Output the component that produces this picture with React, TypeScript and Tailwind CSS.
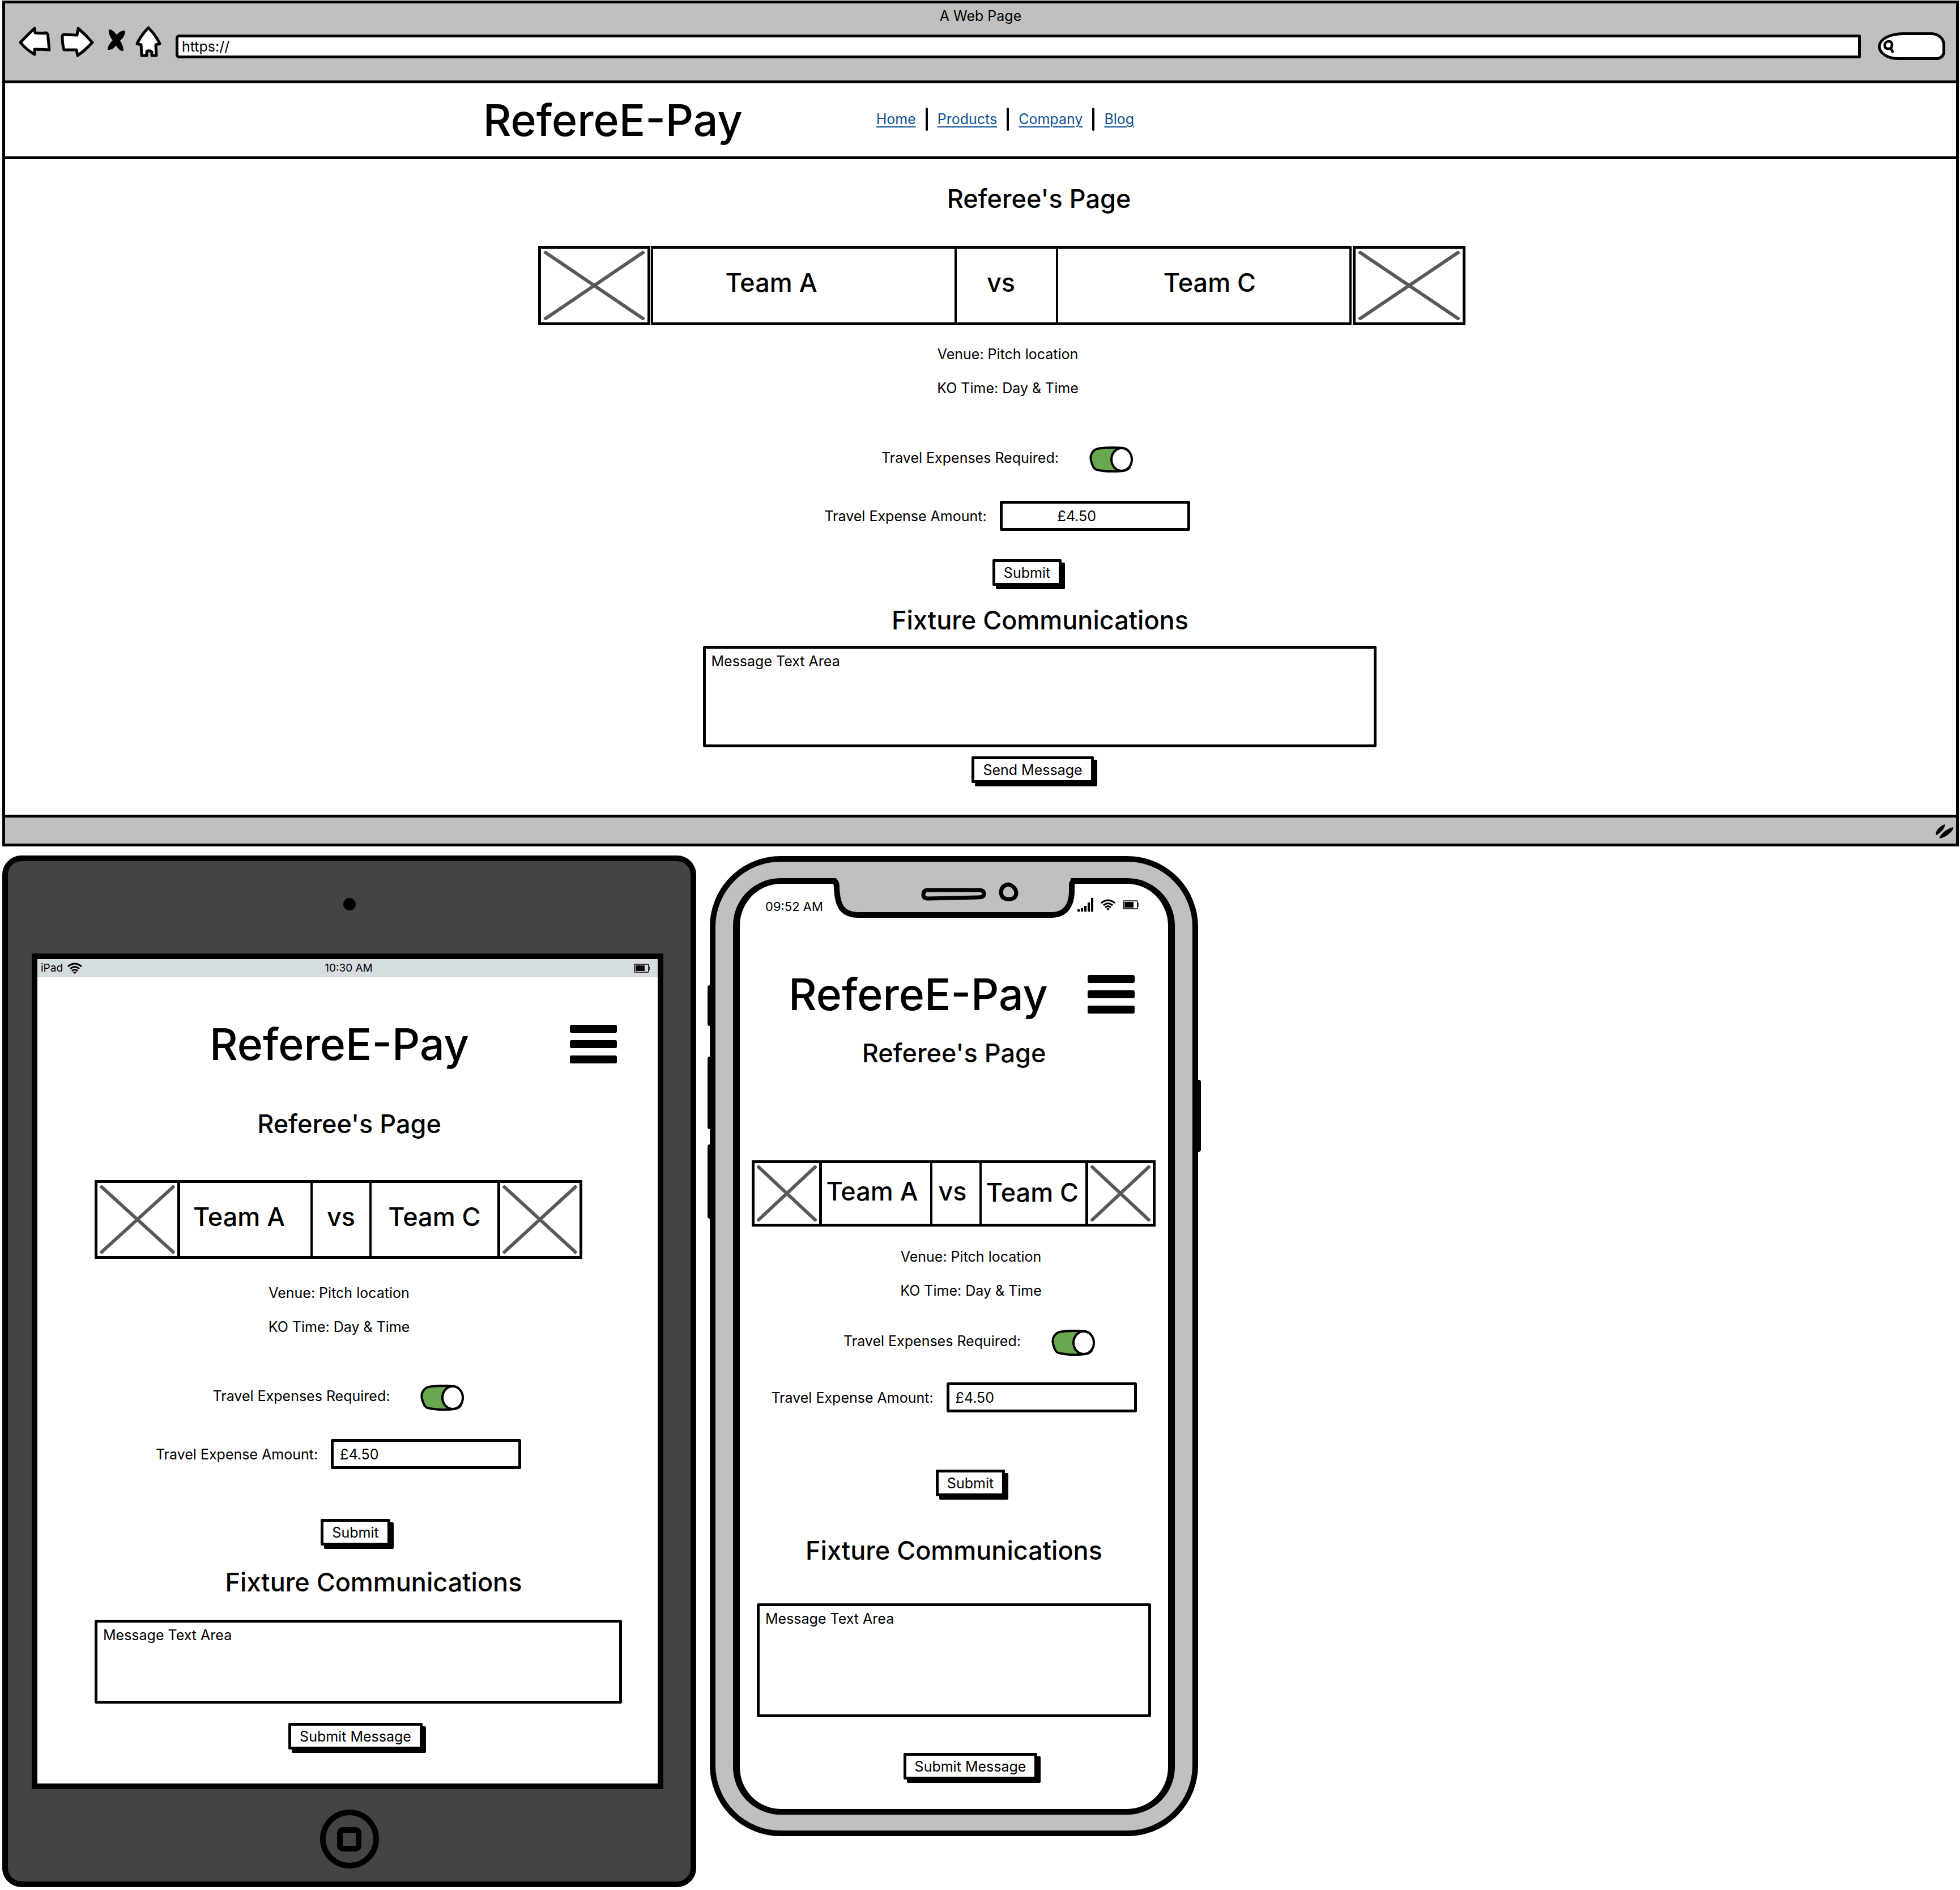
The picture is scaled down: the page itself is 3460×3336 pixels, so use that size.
import { useId, useState, type ReactNode } from "react";

function BackIcon() {
  return (
    <svg viewBox="0 0 58 56" className="h-14 w-[58px] shrink-0" fill="#fff" stroke="#000" strokeWidth="5" strokeLinejoin="round" aria-hidden="true">
      <path d="M4 29 Q18 14 29 4 L30 12 Q42 13 50 12 Q53 13 53 22 L55 42 Q42 41 29 41 L29 50 Q15 42 4 29Z" />
    </svg>
  );
}

function ForwardIcon() {
  return (
    <svg viewBox="0 0 60 56" className="h-14 w-[60px] shrink-0" fill="#fff" stroke="#000" strokeWidth="5" strokeLinejoin="round" aria-hidden="true">
      <path d="M4 19 Q4 14 9 15 L30 16 L32 4 Q46 16 57 29 Q44 43 31 52 L29 42 L7 42 Q4 32 4 19Z" />
    </svg>
  );
}

function StopIcon() {
  return (
    <svg viewBox="0 0 36 56" className="h-14 w-9 shrink-0" aria-hidden="true">
      <path d="M4 6 C12 6 18 14 21 21 C26 28 30 36 30 44 C22 45 17 35 14 29 C8 22 3 15 4 6Z" />
      <path d="M33 8 C24 7 18 14 13 23 C7 29 2 35 2 42 C10 43 16 37 20 29 C27 24 33 18 33 8Z" />
    </svg>
  );
}

function HomeIcon() {
  return (
    <svg viewBox="0 0 46 56" className="h-14 w-[46px] shrink-0" fill="#fff" stroke="#000" strokeWidth="5" strokeLinejoin="round" aria-hidden="true">
      <path d="M23 3 Q36 16 43 31 L36 33 L37 52 H29 V46 Q27 43 24 44 Q20 43 20 46 V52 H11 L10 33 L3 31 Q10 16 23 3Z" />
    </svg>
  );
}

function WifiIcon({ className }: { className: string }) {
  return (
    <svg viewBox="0 0 26 20" className={className} fill="none" stroke="#000" strokeWidth="3" aria-hidden="true">
      <path d="M1 7 Q13 -3 25 7" />
      <path d="M5 11 Q13 4 21 11" />
      <path d="M8 15 Q13 10 18 15" />
      <path d="M10 17 Q13 15 16 17 L13 20Z" fill="#000" stroke="none" />
    </svg>
  );
}

function BatteryIcon() {
  return (
    <svg viewBox="0 0 28 16" className="h-4 w-7" aria-hidden="true">
      <rect x="1" y="1" width="25" height="14" rx="1" fill="none" stroke="#000" strokeWidth="1.5" />
      <path d="M26 5 L28 6 V10 L26 11" fill="none" stroke="#000" strokeWidth="1.5" />
      <rect x="3" y="3" width="16" height="10" />
    </svg>
  );
}

function SignalIcon() {
  return (
    <svg viewBox="0 0 28 24" className="h-6 w-7" aria-hidden="true">
      <path d="M0 20h4v4H0zM6 18h4v6H6zM12 14h4v10h-4zM18 8h4v16h-4zM24 0h4v24h-4z" />
    </svg>
  );
}

function MenuButton() {
  return (
    <button type="button" aria-label="Menu" className="flex w-[83px] flex-col gap-[13px]">
      <span className="h-[14px] w-full rounded-[3px] bg-black" />
      <span className="h-[14px] w-full rounded-[3px] bg-black" />
      <span className="h-[14px] w-full rounded-[3px] bg-black" />
    </button>
  );
}

function Row({ className, children }: { className: string; children: ReactNode }) {
  return <div className={`flex justify-center ${className}`}>{children}</div>;
}

function Logo() {
  return <h1 className="text-[77px] leading-[90px] font-medium whitespace-nowrap">RefereE-Pay</h1>;
}

function Heading({ children }: { children: ReactNode }) {
  return <h2 className="text-[45px] leading-[60px] font-medium whitespace-nowrap">{children}</h2>;
}

function SketchButton({ children }: { children: ReactNode }) {
  return (
    <button type="button" className="mr-1.5 mb-1.5 h-[47px] rounded-[2px] border-[5px] border-black bg-white px-[15px] leading-8 whitespace-nowrap shadow-[6px_6px_0_0_#000]">
      {children}
    </button>
  );
}

function TeamImage({ label }: { label: string }) {
  return (
    <div className="min-h-0 border-[5px] border-black bg-white p-1">
      <svg role="img" aria-label={label} viewBox="0 0 100 100" preserveAspectRatio="none" className="size-full" stroke="#595959" strokeWidth="6" fill="none">
        <path d="M1 1 L99 99 M99 1 L1 99" vectorEffect="non-scaling-stroke" />
      </svg>
    </div>
  );
}

function TeamCell({ className, children }: { className: string; children: ReactNode }) {
  return (
    <div className={`-ml-1 flex min-h-0 items-center justify-center rounded-[2px] border-x-4 border-y-[5px] border-black bg-white text-[45px] leading-[60px] font-medium whitespace-nowrap ${className}`}>
      {children}
    </div>
  );
}

function MatchInfo({ className }: { className: string }) {
  return (
    <div className={`flex flex-col items-center gap-7 ${className}`}>
      <p>Venue: Pitch location</p>
      <p>KO Time: Day &amp; Time</p>
    </div>
  );
}

function ExpenseToggle() {
  const id = useId();
  const [on, setOn] = useState(true);
  return (
    <>
      <label htmlFor={id} className="pb-1.5">Travel Expenses Required:</label>
      <span className="relative ml-[54px] h-[46px] w-[77px]">
        <svg viewBox="0 0 77 46" className="size-full" stroke="#000" strokeWidth="4" aria-hidden="true">
          <path d="M10 6 Q12 4 22 3 Q40 1 60 3 Q67 4 70 10 Q78 23 72 35 Q70 41 60 43 Q38 46 17 42 Q9 41 7 36 Q-1 20 5 11 Q7 8 10 6Z" fill={on ? "#6aa84f" : "#fff"} />
          <ellipse cx={on ? 57 : 20} cy="23" rx="18" ry="20" fill="#fff" />
        </svg>
        <input id={id} type="checkbox" role="switch" checked={on} onChange={(e) => setOn(e.target.checked)} className="absolute inset-0 size-full cursor-pointer opacity-0" />
      </span>
    </>
  );
}

function ExpenseAmount({ className }: { className: string }) {
  const id = useId();
  return (
    <>
      <label htmlFor={id}>Travel Expense Amount:</label>
      <input id={id} type="text" defaultValue="£4.50" className={`ml-[23px] h-[53px] w-[336px] rounded-[3px] border-[5px] border-black bg-white ${className}`} />
    </>
  );
}

function MessageBox({ className }: { className: string }) {
  return (
    <textarea aria-label="Message" defaultValue="Message Text Area" className={`resize-none rounded-[3px] border-[5px] border-black bg-white px-2.5 pt-1.5 leading-8 ${className}`} />
  );
}

const links = ["Home", "Products", "Company", "Blog"];

function BrowserWindow() {
  return (
    <section className="border-[5px] border-black bg-white">
      <div className="border-b-[5px] border-black bg-[#c0c0c0] pt-1.5 pb-9">
        <p className="text-center">A Web Page</p>
        <div className="flex items-start pt-0.5 pr-[19px] pl-[23px]">
          <button type="button" aria-label="Back"><BackIcon /></button>
          <button type="button" aria-label="Forward" className="ml-4"><ForwardIcon /></button>
          <button type="button" aria-label="Stop" className="ml-[22px]"><StopIcon /></button>
          <button type="button" aria-label="Home" className="ml-[15px]"><HomeIcon /></button>
          <input type="text" aria-label="Address" defaultValue="https://" className="mt-[15px] ml-[25px] h-[42px] min-w-0 flex-1 rounded-[6px_3px_3px_6px] border-[5px] border-black bg-white pl-1.5" />
          <label className="mt-[11px] ml-[30px] flex h-[49px] w-[119px] items-center rounded-[44px_24px_16px_36px/25px_22px_14px_24px] border-[5px] border-black bg-white pl-1">
            <svg viewBox="0 0 20 24" className="h-6 w-5 shrink-0" fill="none" stroke="#000" strokeWidth="4.5" strokeLinecap="round" aria-hidden="true">
              <path d="M10 3 Q16 3 16 9 L15 14 Q13 16 9 16 Q3 16 3 10 Q3 4 10 3Z M14 16 L17 21" />
            </svg>
            <input type="search" aria-label="Search" className="w-full min-w-0 bg-transparent outline-none" />
          </label>
        </div>
      </div>

      <header className="flex items-center border-b-[5px] border-black pt-5 pb-[19px] pl-[24.5%]">
        <Logo />
        <nav className="ml-[236px] flex items-center pb-1 text-[#0b5394]">
          {links.map((name, i) => (
            <a key={name} href="#" className={i === 0 ? "underline decoration-2 underline-offset-4" : "ml-[17px] flex items-center underline decoration-2 underline-offset-4"}>
              {i > 0 && <span className="mr-[17px] h-[41px] w-1 rounded-full bg-black" />}
              {name}
            </a>
          ))}
        </nav>
      </header>

      <main>
        <Row className="pt-10 pl-[206px]"><Heading>Referee's Page</Heading></Row>
        <Row className="mt-[53px] pl-[74px]">
          <div className="grid h-[140px] w-full max-w-[1637px] grid-cols-[198fr_541fr_179fr_520fr_199fr] grid-rows-1">
            <TeamImage label="Team A badge" />
            <TeamCell className="ml-px pr-[114px] pb-2.5">Team A</TeamCell>
            <TeamCell className="pr-[18px] pb-2.5">vs</TeamCell>
            <TeamCell className="mr-0.5 pl-[22px] pb-2.5">Team C</TeamCell>
            <TeamImage label="Team C badge" />
          </div>
        </Row>
        <MatchInfo className="mt-[35px] pl-24" />
        <Row className="mt-[87px] items-center pl-[94px]"><ExpenseToggle /></Row>
        <Row className="mt-[50px] items-center pl-[94px]"><ExpenseAmount className="pl-[97px]" /></Row>
        <Row className="mt-[50px] pl-[170px]"><SketchButton>Submit</SketchButton></Row>
        <Row className="mt-[25px] pl-[210px]"><Heading>Fixture Communications</Heading></Row>
        <Row className="mt-[15px] pl-[208px]"><MessageBox className="h-[179px] w-full max-w-[1189px]" /></Row>
        <Row className="mt-4 pb-[50px] pl-[190px]"><SketchButton>Send Message</SketchButton></Row>
      </main>

      <footer className="flex h-[51px] items-end justify-end border-t-[5px] border-black bg-[#c0c0c0] pr-[3px] pb-2">
        <svg viewBox="0 0 34 26" className="h-[26px] w-[34px]" aria-hidden="true">
          <path d="M17 0 C19 4 11 15 2 19 C-1 13 9 2 17 0Z" />
          <path d="M32 5 C33 11 20 23 8 25 C7 19 21 7 32 5Z" />
        </svg>
      </footer>
    </section>
  );
}

function Tablet() {
  return (
    <section className="rounded-[34px] border-[10px] border-black bg-[#444] pr-12 pl-[42px]">
      <div className="flex h-[163px] justify-center pt-[65px] pl-1.5">
        <span className="size-[22px] rounded-full bg-black" />
      </div>
      <div className="border-[10px] border-black bg-white">
        <div className="grid h-8 grid-cols-3 items-center bg-[#d6dde0] px-1.5 text-[19px] leading-8">
          <span className="flex items-center gap-2">iPad <WifiIcon className="h-5 w-[26px]" /></span>
          <span className="pl-1 text-center">10:30 AM</span>
          <span className="flex justify-end pr-2"><BatteryIcon /></span>
        </div>
        <div className="mt-[73px] flex items-center justify-between pr-[72px] pl-[304px]">
          <Logo />
          <MenuButton />
        </div>
        <Row className="mt-[66px] pl-1.5"><Heading>Referee's Page</Heading></Row>
        <div className="mt-[69px] mr-[133px] ml-[101px] grid h-[139px] grid-cols-[151fr_234fr_104fr_222fr_150fr] grid-rows-1">
          <TeamImage label="Team A badge" />
          <TeamCell className="pr-[22px] pb-2.5">Team A</TeamCell>
          <TeamCell className="pb-2.5">vs</TeamCell>
          <TeamCell className="-mr-1 pb-2.5">Team C</TeamCell>
          <TeamImage label="Team C badge" />
        </div>
        <MatchInfo className="mt-11 pr-[30px]" />
        <Row className="mt-[86px] items-center pr-8"><ExpenseToggle /></Row>
        <Row className="mt-[50px] items-center pr-8"><ExpenseAmount className="pl-[11px]" /></Row>
        <Row className="mt-[88px] pl-[34px]"><SketchButton>Submit</SketchButton></Row>
        <Row className="mt-[29px] pl-[92px]"><Heading>Fixture Communications</Heading></Row>
        <div className="mt-9 mr-[63px] ml-[101px] flex"><MessageBox className="h-[148px] w-full" /></div>
        <Row className="mt-[34px] pb-[54px] pl-[34px]"><SketchButton>Submit Message</SketchButton></Row>
      </div>
      <div className="flex justify-center pt-9 pb-[23px] pl-1.5">
        <button type="button" aria-label="Home" className="flex size-[104px] items-center justify-center rounded-full border-[10px] border-black">
          <span className="size-[43px] rounded-[10px] border-[10px] border-black" />
        </button>
      </div>
    </section>
  );
}

function Phone() {
  return (
    <section className="relative mt-px rounded-[125px] border-[10px] border-black bg-[#c0c0c0] px-[31px] pt-[29px] pb-7">
      <span className="absolute top-[218px] -left-[14px] h-[72px] w-2 rounded-l-[4px] bg-black" />
      <span className="absolute top-[344px] -left-[14px] h-32 w-2 rounded-l-[4px] bg-black" />
      <span className="absolute top-[499px] -left-[14px] h-[131px] w-2 rounded-l-[4px] bg-black" />
      <span className="absolute top-[385px] -right-[15px] h-[127px] w-2.5 rounded-r-[4px] bg-black" />
      <div className="relative rounded-[84px] border-x-[12px] border-y-[10px] border-black bg-white">
        <svg viewBox="0 0 440 76" className="absolute -top-[10px] left-1/2 h-[76px] w-[440px] -translate-x-1/2" aria-hidden="true">
          <path d="M12 0 H426 V20 H18 Z" fill="#c0c0c0" />
          <path d="M0 5 H6 Q13 5 13 16 C14 48 22 65 52 65 H392 C418 65 427 46 428 26 V12 Q428 5 436 5 H440" fill="#c0c0c0" stroke="#000" strokeWidth="10" />
          <path d="M18 0 H423 V12 H18 Z" fill="#c0c0c0" />
          <path d="M172 21 H264 Q273 21 273 28 Q273 34 262 34 L174 36 Q166 36 166 29 Q166 22 172 21Z" fill="#c0c0c0" stroke="#000" strokeWidth="7" strokeLinejoin="round" />
          <path d="M317 11 Q330 16 330 27 Q329 37 318 37 Q304 38 303 25 Q304 12 317 11Z" fill="#c0c0c0" stroke="#000" strokeWidth="7" />
        </svg>
        <div className="flex h-20 items-center justify-between pr-[52px] pl-[45px] text-[22px]">
          <span>09:52 AM</span>
          <span className="flex items-center gap-[13px] pb-1.5">
            <SignalIcon />
            <WifiIcon className="h-5 w-[26px]" />
            <BatteryIcon />
          </span>
        </div>
        <div className="mt-[70px] flex items-center justify-between pr-[59px] pl-[86px]">
          <Logo />
          <MenuButton />
        </div>
        <Row className="mt-[29px]"><Heading>Referee's Page</Heading></Row>
        <div className="mt-[159px] mr-[22px] ml-[21px] grid h-[117px] grid-cols-[124fr_195fr_87fr_183fr_124fr] grid-rows-1">
          <TeamImage label="Team A badge" />
          <TeamCell className="pr-[14px] pb-2">Team A</TeamCell>
          <TeamCell className="pr-3 pb-2">vs</TeamCell>
          <TeamCell className="-mr-1 pr-1 pb-1">Team C</TeamCell>
          <TeamImage label="Team C badge" />
        </div>
        <MatchInfo className="mt-[37px] pl-[60px]" />
        <Row className="mt-[53px] items-center pl-[54px]"><ExpenseToggle /></Row>
        <Row className="mt-[47px] items-center"><ExpenseAmount className="pl-[11px]" /></Row>
        <Row className="mt-[101px] pl-16"><SketchButton>Submit</SketchButton></Row>
        <Row className="mt-[60px]"><Heading>Fixture Communications</Heading></Row>
        <div className="mx-[30px] mt-[63px] flex"><MessageBox className="h-[201px] w-full" /></div>
        <Row className="mt-[63px] pb-[46px] pl-16"><SketchButton>Submit Message</SketchButton></Row>
      </div>
    </section>
  );
}

export default function App() {
  return (
    <div className="bg-white pt-px pr-0.5 pb-[5px] pl-1 font-['Inter',sans-serif] text-[25px] leading-8 text-black">
      <BrowserWindow />
      <div className="mt-4 grid grid-cols-[1225fr_862fr_1319fr] items-start gap-x-6">
        <Tablet />
        <Phone />
      </div>
    </div>
  );
}
